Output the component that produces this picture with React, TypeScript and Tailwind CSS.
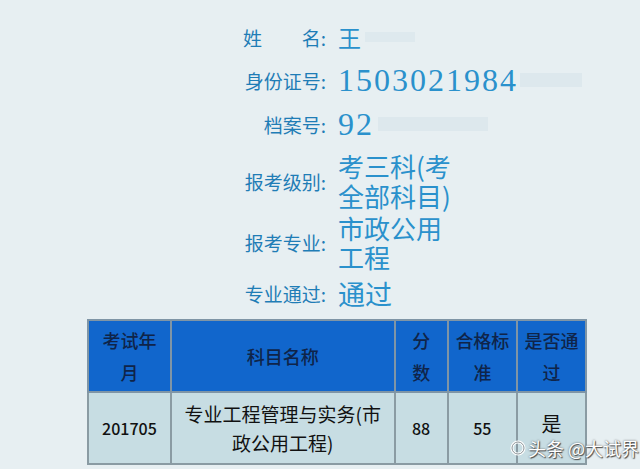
import React from 'react'

const cjk = '"Noto Sans CJK SC", "Noto Sans", sans-serif'

const InfoRow = ({ label, children, h }: { label: React.ReactNode; children: React.ReactNode; h: string }) => (
  <div className={`flex items-center ${h}`}>
    <div className="w-[90px] text-right text-[19px] leading-none text-[#1f7db6] pr-[2px]">{label}</div>
    <div className="pl-[10px] text-[#2a91cc]">{children}</div>
  </div>
)

const App = () => {
  return (
    <div className="relative w-[640px] h-[469px] overflow-hidden bg-[#e7eff2]" style={{ fontFamily: cjk }}>
      <div className="pl-[238px] pt-[16px] flex flex-col">
        <InfoRow h="h-[42px]" label={<div className="flex justify-between pl-[5px]"><span>姓</span><span>名:</span></div>}>
          <div className="flex items-center gap-[4px] text-[23px] leading-none">
            <span>王</span>
            <span className="w-[50px] h-[10px] bg-[#dce7ec] opacity-80" />
          </div>
        </InfoRow>
        <InfoRow h="h-[44px]" label="身份证号:">
          <div className="flex items-center text-[32px] leading-none tracking-[2px]" style={{ fontFamily: '"Liberation Serif", serif' }}>
            <span>1503021984</span>
            <span className="ml-[2px] w-[62px] h-[14px] bg-[#dde8ed]" />
          </div>
        </InfoRow>
        <InfoRow h="h-[44px]" label="档案号:">
          <div className="flex items-center text-[32px] leading-none tracking-[2px]" style={{ fontFamily: '"Liberation Serif", serif' }}>
            <span>92</span>
            <span className="ml-[4px] w-[110px] h-[14px] bg-[#dde8ed]" />
          </div>
        </InfoRow>
        <div className="h-[4px]" />
        <InfoRow h="h-[62px]" label="报考级别:">
          <div className="text-[26px] leading-[30px]">
            <div>考三科(考</div>
            <div>全部科目)</div>
          </div>
        </InfoRow>
        <InfoRow h="h-[60px]" label="报考专业:">
          <div className="text-[26px] leading-[29px]">
            <div>市政公用</div>
            <div>工程</div>
          </div>
        </InfoRow>
        <div className="h-[6px]" />
        <InfoRow h="h-[30px]" label="专业通过:">
          <div className="text-[27px] leading-none">通过</div>
        </InfoRow>
      </div>

      <div className="pl-[87px] pt-[11px]">
        <table className="w-[500px] border-collapse border border-[#b4c4cb] text-center">
          <colgroup>
            <col className="w-[83px]" />
            <col className="w-[225px]" />
            <col className="w-[53px]" />
            <col className="w-[70px]" />
            <col className="w-[69px]" />
          </colgroup>
          <thead>
            <tr className="h-[72px] bg-[#1166cc] text-[#0f2449] text-[18px] leading-[32px]">
              <th className="font-medium border-2 border-[#7f95a6]">考试年<br />月</th>
              <th className="font-medium border-2 border-[#7f95a6]">科目名称</th>
              <th className="font-medium border-2 border-[#7f95a6]">分<br />数</th>
              <th className="font-medium border-2 border-[#7f95a6]">合格标<br />准</th>
              <th className="font-medium border-2 border-[#7f95a6]">是否通<br />过</th>
            </tr>
          </thead>
          <tbody>
            <tr className="h-[72px] bg-[#c7dde3] text-[#111]">
              <td className="border-2 border-[#8a9ba3] text-[16px] font-medium">201705</td>
              <td className="border-2 border-[#8a9ba3] text-[19px] leading-[29px]">专业工程管理与实务(市<br />政公用工程)</td>
              <td className="border-2 border-[#8a9ba3] text-[16px] font-medium">88</td>
              <td className="border-2 border-[#8a9ba3] text-[16px] font-medium">55</td>
              <td className="border-2 border-[#8a9ba3] text-[20px] align-top pt-[16px]">是</td>
            </tr>
          </tbody>
        </table>
      </div>

      <div className="absolute left-[510px] top-[439px] flex items-center gap-[2px]">
        <svg width="16" height="16" viewBox="0 0 16 16">
          <circle cx="8" cy="8" r="6" fill="none" stroke="#ffffff" strokeWidth="3" />
          <circle cx="8" cy="8" r="6" fill="none" stroke="#8a9499" strokeWidth="1" />
        </svg>
        <span className="text-[18px] leading-none text-white [text-shadow:0_0_2px_#555,1px_1px_1px_#444]">头条 @大试界</span>
      </div>
    </div>
  )
}

export default App
